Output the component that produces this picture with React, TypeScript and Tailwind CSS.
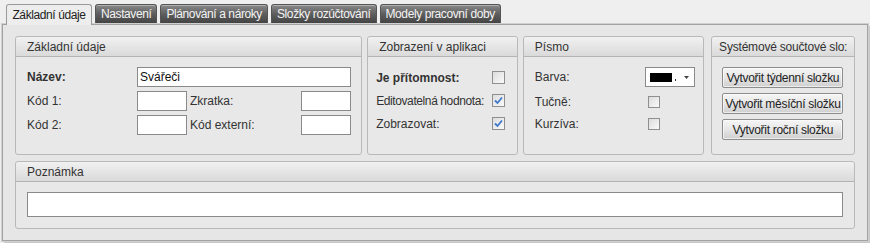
import React from "react";

const font = "font-['Liberation_Sans',Arial,sans-serif]";

function Box({ title, className, center, children }: { title: string; className: string; center?: boolean; children?: React.ReactNode }) {
    return (
        <div className={`flex flex-col border border-[#b9b9b9] rounded-[3px] bg-[#e8e8e8] ${className}`}>
            <div
                className={`h-[20px] shrink-0 flex items-center border-b border-[#b4b4b4] bg-gradient-to-b from-[#f1f1f1] to-[#dadada] rounded-t-[3px] text-[12px] text-[#333] whitespace-nowrap ${center ? "justify-center tracking-[-0.2px]" : "px-[11px]"}`}
            >
                {title}
            </div>
            {children}
        </div>
    );
}

function Check({ checked, size = 13 }: { checked?: boolean; size?: number }) {
    return (
        <div
            className={`flex items-center justify-center border border-[#8f8f8f] bg-gradient-to-br from-[#dcdcdc] to-[#fafafa] ${size === 13 ? "w-[13px] h-[13px]" : "w-[12px] h-[12px]"}`}
        >
            {checked && (
                <svg width="9" height="9" viewBox="0 0 9 9">
                    <path d="M1 4.5 L3.5 7 L8 1.5" stroke="#3f78c8" strokeWidth="1.8" fill="none" />
                </svg>
            )}
        </div>
    );
}

function Input({ className }: { className: string }) {
    return <div className={`h-[20px] bg-white border border-[#8a8a8a] ${className}`} />;
}

function Btn({ label }: { label: string }) {
    return (
        <button className="w-[121px] h-[21px] border border-[#8d8d8d] rounded-[2px] bg-gradient-to-b from-[#f6f6f6] via-[#e6e6e6] to-[#cfcfcf] text-[12px] tracking-[-0.3px] text-[#222] shadow-[inset_0_0_0_1px_rgba(255,255,255,0.6)] whitespace-nowrap">
            {label}
        </button>
    );
}

export default function App() {
    const tabs = ["Nastavení", "Plánování a nároky", "Složky rozúčtování", "Modely pracovní doby"];
    return (
        <div className={`w-[870px] h-[243px] bg-[#efefef] flex flex-col ${font} text-[12px] text-[#333]`}>
            {/* tabs */}
            <div className="h-[24px] flex items-end pl-[6px] gap-[2px] shrink-0 tracking-[-0.4px]">
                <div className="h-[21px] w-[86px] justify-center flex items-center border border-b-0 border-[#9a9a9a] rounded-t-[3px] bg-[#ededed] text-[#222] relative top-[1px]">
                    Základní údaje
                </div>
                {tabs.map((t) => (
                    <div
                        key={t}
                        className="h-[19px] px-[5px] flex items-center border border-b-0 border-[#555] rounded-t-[3px] bg-gradient-to-b from-[#8a8a8a] via-[#5e5e5e] to-[#444] text-[#f4f4f4] shadow-[inset_0_1px_0_rgba(255,255,255,0.35)] mb-[1px] ml-[1px]"
                    >
                        {t}
                    </div>
                ))}
            </div>

            {/* tab panel */}
            <div className="flex-1 ml-[2px] mr-[2px] mb-[2px] border border-[#a3a3a3] bg-[#e6e6e6] shadow-[0_0_0_1px_#d0d0d0,2px_2px_0_0_#c8c8c8] px-[12px] pt-[11px] flex flex-col gap-[6px]">
                <div className="flex h-[119px] gap-[5px]">
                    <Box title="Základní údaje" className="w-[348px]">
                        <div className="pl-[11px] pt-[10px] flex flex-col gap-[4px]">
                            <div className="flex items-center h-[20px]">
                                <span className="w-[110px] font-bold">Název:</span>
                                <div className="w-[214px] h-[20px] bg-white border border-[#8a8a8a] flex items-center px-[2px] text-[#111]">Svářeči</div>
                            </div>
                            <div className="flex items-center h-[20px]">
                                <span className="w-[110px]">Kód 1:</span>
                                <Input className="w-[50px]" />
                                <span className="w-[114px] pl-[3px]">Zkratka:</span>
                                <Input className="w-[50px]" />
                            </div>
                            <div className="flex items-center h-[20px]">
                                <span className="w-[110px]">Kód 2:</span>
                                <Input className="w-[50px]" />
                                <span className="w-[114px] pl-[3px]">Kód externí:</span>
                                <Input className="w-[50px]" />
                            </div>
                        </div>
                    </Box>

                    <Box title="Zobrazení v aplikaci" className="w-[151px]">
                        <div className="pl-[8px] pt-[13px] flex flex-col gap-[8px]">
                            <div className="flex items-center h-[15px]">
                                <span className="w-[116px] font-bold">Je přítomnost:</span>
                                <Check />
                            </div>
                            <div className="flex items-center h-[15px]">
                                <span className="w-[116px] tracking-[-0.4px]">Editovatelná hodnota:</span>
                                <Check checked />
                            </div>
                            <div className="flex items-center h-[15px]">
                                <span className="w-[116px]">Zobrazovat:</span>
                                <Check checked />
                            </div>
                        </div>
                    </Box>

                    <Box title="Písmo" className="w-[182px]">
                        <div className="pl-[11px] pt-[10px] flex flex-col">
                            <div className="flex items-center h-[20px]">
                                <span className="w-[110px]">Barva:</span>
                                <div className="w-[50px] h-[20px] bg-white border border-[#8a8a8a] flex items-center pl-[4px] gap-[3px]">
                                    <div className="w-[22px] h-[9px] bg-black" />
                                    <div className="w-[1px] h-[2px] bg-[#333] mt-[6px]" />
                                    <svg width="5" height="3" viewBox="0 0 5 3" className="ml-[5px]">
                                        <path d="M0 0 L5 0 L2.5 3 Z" fill="#444" />
                                    </svg>
                                </div>
                            </div>
                            <div className="flex items-center h-[15px] mt-[7px]">
                                <span className="w-[113px]">Tučně:</span>
                                <Check size={12} />
                            </div>
                            <div className="flex items-center h-[15px] mt-[7px]">
                                <span className="w-[113px]">Kurzíva:</span>
                                <Check size={12} />
                            </div>
                        </div>
                    </Box>

                    <Box title="Systémové součtové slo:" center className="w-[144px] ml-[2px]">
                        <div className="pl-[10px] pt-[10px] flex flex-col gap-[5px]">
                            <Btn label="Vytvořit týdenní složku" />
                            <Btn label="Vytvořit měsíční složku" />
                            <Btn label="Vytvořit roční složku" />
                        </div>
                    </Box>
                </div>

                <Box title="Poznámka" className="h-[68px]">
                    <div className="px-[11px] pt-[10px]">
                        <div className="h-[25px] bg-white border border-[#8a8a8a]" />
                    </div>
                </Box>
            </div>
        </div>
    );
}
